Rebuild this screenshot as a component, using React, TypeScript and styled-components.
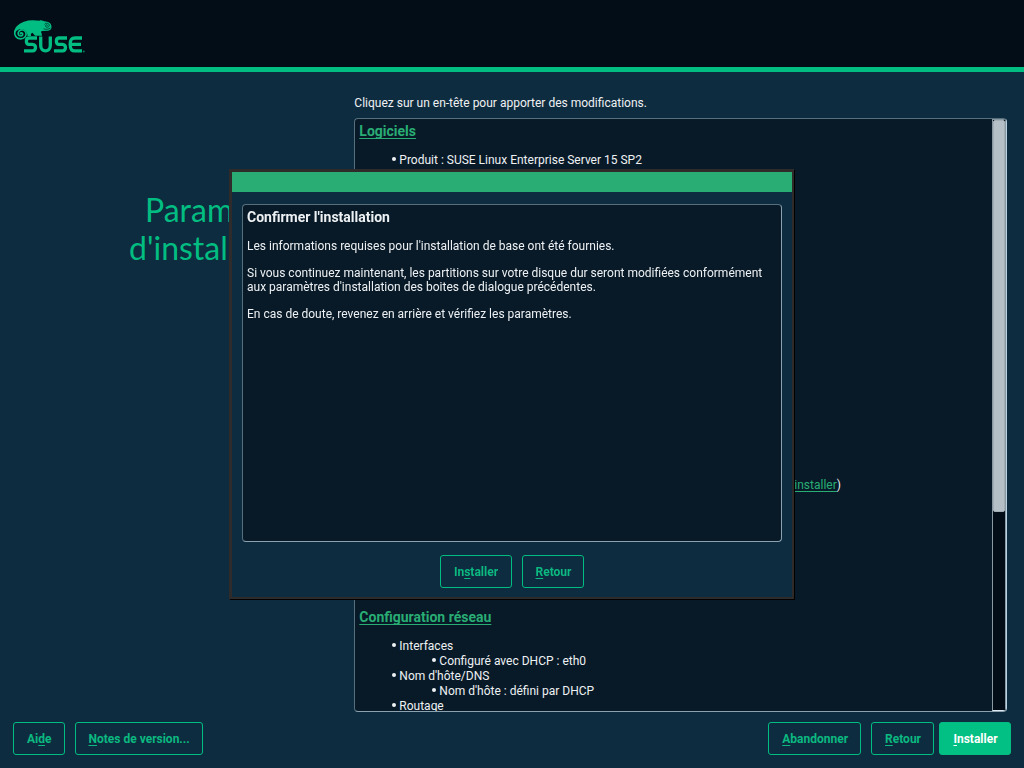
import React from "react";
import styled, { createGlobalStyle, css } from "styled-components";

const GlobalStyle = createGlobalStyle`
  *, *::before, *::after { box-sizing: border-box; }
  body {
    margin: 0;
    background: #0e2c3f;
    color: #eef1f3;
    font-family: Roboto, "Liberation Sans", sans-serif;
    font-size: 12px;
    line-height: 15px;
  }
`;

const Shell = styled.div`
  display: flex;
  flex-direction: column;
  height: 100vh;
  overflow: hidden;
`;

const Header = styled.header`
  flex: none;
  height: 72px;
  padding: 19px 13px 0;
  background: #020d18;
  border-bottom: 5px solid #02bd81;
`;

const LogoSvg = styled.svg`
  display: block;
  width: 74px;
  height: 36px;
`;

const Main = styled.main`
  flex: 1;
  min-height: 0;
  display: grid;
  grid-template-columns: minmax(0, 1fr) minmax(0, 2fr);
  gap: 14px;
  padding: 24px 17px 0 14px;
`;

const Title = styled.h1`
  margin: 0;
  padding: 95px 0 0 115px;
  text-indent: 16px;
  color: #02bd81;
  font: 400 32px/38px Lato, "Open Sans", sans-serif;
`;

const Overview = styled.section`
  display: flex;
  flex-direction: column;
  min-height: 0;
`;

const Hint = styled.p`
  margin: 0 0 7px;
`;

const frame = css`
  background: #081a28;
  border: 1px solid #566f7d;
  border-radius: 4px;
`;

const Panel = styled.div`
  ${frame}
  flex: 1;
  min-height: 0;
  display: flex;
  overflow: hidden;
  border-bottom-color: #8ba3b1;
  border-right-color: #b9d3e4;
`;

const Summary = styled.div`
  flex: 1;
  overflow: hidden;
  padding: 4px;
`;

const Scrollbar = styled.div`
  flex: none;
  width: 14px;
  background: #020d18;
  border: 1px solid #8a99a2;
  border-bottom-color: #dfe9ef;
`;

const Thumb = styled.div`
  height: 66.5%;
  background: #b5bfc6;
  border: 1px solid #a2adb5;
  border-radius: 2px;
`;

const SectionTitle = styled.h2`
  margin: 0 0 14px;
  font-size: 14px;
  line-height: 16px;
`;

const Link = styled.a`
  color: #29ad74;
  text-decoration: underline;
  text-underline-offset: 2px;
  text-decoration-skip-ink: none;
`;

const List = styled.ul`
  margin: 0;
  padding-left: 40px;
  list-style: none;
`;

const Item = styled.li`
  &::before {
    content: "";
    display: inline-block;
    width: 4px;
    height: 4px;
    margin: 0 3px 3px -7px;
    border-radius: 50%;
    background: #eef1f3;
  }
`;

const Action = styled.p`
  margin: 310px 0 0;
  padding-left: 435px;
`;

const NetworkSection = styled.div`
  margin-top: 116px;
`;

const Bar = styled.footer`
  flex: none;
  display: flex;
  gap: 10px;
  padding: 10px 13px 13px;
`;

const BarGroup = styled.div`
  display: flex;
  gap: 5px;
  margin-left: auto;
`;

const Button = styled.button<{ $primary?: boolean; $spaced?: boolean; $wide?: boolean }>`
  height: 33px;
  min-width: ${(p) => (p.$wide ? "72px" : "0")};
  padding: 2px 12px 0 13px;
  border: 1px solid #02bd81;
  border-radius: 3px;
  background: ${(p) => (p.$primary ? "#02c083" : "transparent")};
  color: ${(p) => (p.$primary ? "#ffffff" : "#0bb981")};
  margin-right: ${(p) => (p.$spaced ? "5px" : "0")};
  font: bold 12px/15px Roboto, "Liberation Sans", sans-serif;
`;

const Key = styled.u`
  text-underline-offset: 2px;
  text-decoration-skip-ink: none;
`;

const Overlay = styled.div`
  position: fixed;
  inset: 0;
  display: flex;
  align-items: center;
  justify-content: center;
`;

const Dialog = styled.section`
  display: flex;
  flex-direction: column;
  width: min(565px, 90vw);
  min-height: 430px;
  margin: 0 1px 1px 0;
  background: #0e2c3f;
  border: solid #2f2b2b;
  border-width: 3px 2px 2px 3px;
  box-shadow: 1px 1px 0 #000000;
`;

const DialogBar = styled.div`
  height: 20px;
  background: #29ad74;
`;

const DialogText = styled.div`
  ${frame}
  flex: 1;
  margin: 12px 10px 13px;
  padding: 4px;
  border-bottom-color: #8ba3b1;
  border-right-color: #8ba3b1;
  line-height: 14px;
`;

const DialogTitle = styled.h2`
  margin: 0 0 14px;
  font-size: 14px;
  line-height: 16px;
`;

const Paragraph = styled.p`
  margin: 0 0 13px;
`;

const DialogActions = styled.div`
  display: flex;
  justify-content: center;
  gap: 10px;
  padding-bottom: 9px;
`;

function Logo() {
  return (
    <LogoSvg viewBox="0 0 74 36" role="img" aria-label="SUSE">
      <path
        fill="#02bd81"
        d="M38.500 8C38.500 4.500 36 3.200 33 2.600C30 2.200 29.500 1 27 1.200L26.500 1.800C17 .2 9 2 4 7C2 9 1 11.500 1 14.500L4 11.500C8 8 14.500 10.500 14.500 17H18C17.500 15.500 18 14.500 19.500 13.800L22 16.800H29L28.500 14C27.500 13 28 12 29.500 12L35 11.800C37.500 11.500 38.500 10 38.500 8Z"
      />
      <path
        fill="none"
        stroke="#02bd81"
        strokeWidth="1.7"
        strokeLinecap="round"
        d="M2 12C.8 16 3.500 19.800 7.500 19.800C11.500 19.800 13.800 17 13 13.800C12.200 11 8.500 9.800 6.300 11.800C4.300 13.700 5 16.800 7.500 17C9.500 17 10.300 15.200 9.200 14.200C8.500 13.700 7.800 13.900 7.500 14.500"
      />
      <path
        fill="none"
        stroke="#020d18"
        strokeWidth=".6"
        d="M31.500 5.500C32.500 3.500 36.500 4 36.300 6.500C36 8.800 32.500 8.800 32.500 6.800C32.700 5.500 34.500 5.500 34.700 6.700M30.500 9.800C33 10.800 35.500 10.300 37.500 9"
      />
      <g fill="none" stroke="#02bd81" strokeWidth="3.300" strokeLinejoin="round">
        <path d="M24 19H16C12.500 19 12.500 25.300 16 25.300H19.500C23.500 25.300 23.500 31.900 19.500 31.900H11" />
        <path d="M27.700 17.400V26.500C27.700 33.700 37.300 33.700 37.300 26.500V17.400" />
        <path d="M54 19H46C42.500 19 42.500 25.300 46 25.300H49.500C53.500 25.300 53.500 31.900 49.500 31.900H41" />
        <path d="M69 19H62C58 19 57.200 21.500 57.200 25.400C57.200 29.500 58 31.900 62 31.900H69M58 25.400H68" />
      </g>
      <circle cx="70.800" cy="32.500" r="1" fill="#087a5a" />
    </LogoSvg>
  );
}

export default function App() {
  return (
    <>
      <GlobalStyle />
      <Shell>
        <Header>
          <Logo />
        </Header>
        <Main>
          <Title>
            Paramètres
            <br />
            <TitleLine>d'installation</TitleLine>
          </Title>
          <Overview>
            <Hint>Cliquez sur un en-tête pour apporter des modifications.</Hint>
            <Panel>
              <Summary>
                <SectionTitle>
                  <Link href="#logiciels">Logiciels</Link>
                </SectionTitle>
                <List>
                  <Item>Produit : SUSE Linux Enterprise Server 15 SP2</Item>
                </List>
                <Action>
                  <Link href="#installer">installer</Link>)
                </Action>
                <NetworkSection>
                  <SectionTitle>
                    <Link href="#reseau">Configuration réseau</Link>
                  </SectionTitle>
                  <List>
                    <Item>
                      Interfaces
                      <List>
                        <Item>Configuré avec DHCP : eth0</Item>
                      </List>
                    </Item>
                    <Item>
                      Nom d'hôte/DNS
                      <List>
                        <Item>Nom d'hôte : défini par DHCP</Item>
                      </List>
                    </Item>
                    <Item>Routage</Item>
                  </List>
                </NetworkSection>
              </Summary>
              <Scrollbar>
                <Thumb />
              </Scrollbar>
            </Panel>
          </Overview>
        </Main>
        <Bar>
          <Button type="button">
            Ai<Key>d</Key>e
          </Button>
          <Button type="button">
            <Key>N</Key>otes de version...
          </Button>
          <BarGroup>
            <Button type="button" $spaced>
              <Key>A</Key>bandonner
            </Button>
            <Button type="button">
              <Key>R</Key>etour
            </Button>
            <Button type="button" $primary $wide>
              <Key>I</Key>nstaller
            </Button>
          </BarGroup>
        </Bar>
      </Shell>
      <Overlay>
        <Dialog role="dialog" aria-modal="true" aria-labelledby="confirm-title">
          <DialogBar />
          <DialogText>
            <DialogTitle id="confirm-title">Confirmer l'installation</DialogTitle>
            <Paragraph>
              Les informations requises pour l'installation de base ont été fournies.
            </Paragraph>
            <Paragraph>
              Si vous continuez maintenant, les partitions sur votre disque dur seront modifiées
              conformément aux paramètres d'installation des boites de dialogue précédentes.
            </Paragraph>
            <Paragraph>En cas de doute, revenez en arrière et vérifiez les paramètres.</Paragraph>
          </DialogText>
          <DialogActions>
            <Button type="button" $wide>
              In<Key>s</Key>taller
            </Button>
            <Button type="button">
              <Key>R</Key>etour
            </Button>
          </DialogActions>
        </Dialog>
      </Overlay>
    </>
  );
}

const TitleLine = styled.span`
  white-space: nowrap;
`;
